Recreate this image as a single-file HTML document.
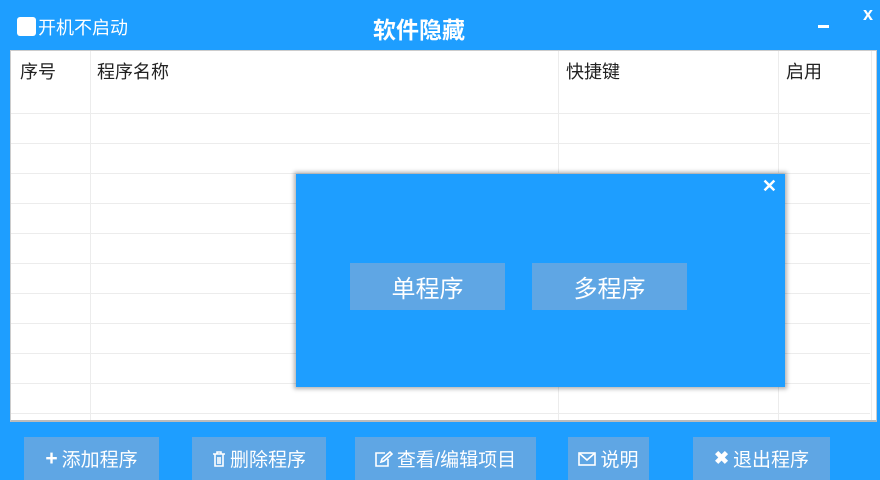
<!DOCTYPE html>
<html><head><meta charset="utf-8"><style>
*{margin:0;padding:0;box-sizing:border-box}
body{width:880px;height:480px;background:#1e9eff;position:relative;overflow:hidden;font-family:"Liberation Sans","Noto Sans CJK SC",sans-serif;color:#fff}
.abs{position:absolute}
.tbl{left:10px;top:50px;width:867px;height:372px;background:#fff;border:1px solid #ccc;border-bottom:2px solid #bbb}
.vl{position:absolute;top:0;bottom:0;width:1px;background:#ececec}
.hl{position:absolute;left:0;right:6px;height:1px;background:#ececec}
.th{position:absolute;top:7px;font-size:18px;color:#222}
.btn{position:absolute;top:437px;height:43px;background:#5fa6e4;font-size:19px;display:flex;align-items:center;justify-content:center;gap:4px}
.dlg{left:296px;top:174px;width:489px;height:213px;background:#1e9eff;box-shadow:0 0 4px 2px rgba(0,0,0,.3)}
.db{position:absolute;top:89px;width:155px;height:47px;background:#5fa6e4;font-size:24px;display:flex;align-items:center;justify-content:center}
</style></head><body>
<div class="abs" style="left:17px;top:17px;width:19px;height:19px;background:#fff;border-radius:3px"></div>
<div class="abs" style="left:38px;top:14px;font-size:18px">开机不启动</div>
<div class="abs" style="left:373px;top:11px;font-size:23px;font-weight:bold">软件隐藏</div>
<div class="abs" style="left:818px;top:25px;width:11px;height:3px;background:#fff"></div>
<div class="abs" style="left:863px;top:4px;font-size:18px;font-weight:bold">x</div>
<div class="abs tbl">
<div class="vl" style="left:79px"></div><div class="vl" style="left:547px"></div><div class="vl" style="left:767px"></div><div class="vl" style="left:860px"></div>
<div class="th" style="left:9px">序号</div><div class="th" style="left:86px">程序名称</div><div class="th" style="left:555px">快捷键</div><div class="th" style="left:775px">启用</div>
<div class="hl" style="top:62px"></div><div class="hl" style="top:92px"></div><div class="hl" style="top:122px"></div><div class="hl" style="top:152px"></div><div class="hl" style="top:182px"></div><div class="hl" style="top:212px"></div><div class="hl" style="top:242px"></div><div class="hl" style="top:272px"></div><div class="hl" style="top:302px"></div><div class="hl" style="top:332px"></div><div class="hl" style="top:362px"></div>
</div>
<div class="btn" style="left:24px;width:135px"><b style="font-size:21px">+</b>添加程序</div>
<div class="btn" style="left:192px;width:134px"><svg width="14" height="16" viewBox="0 0 14 16" fill="none" stroke="#fff" stroke-width="1.6"><path d="M1 3h12M5 3V1h4v2M3 3v12h8V3M6 6v7M8 6v7"/></svg>删除程序</div>
<div class="btn" style="left:355px;width:181px"><svg width="18" height="16" viewBox="0 0 18 16" fill="none" stroke="#fff" stroke-width="1.6"><path d="M10 2H1v13h12V8M6 11l1-3 8-7 2 2-8 7z"/></svg>查看/编辑项目</div>
<div class="btn" style="left:568px;width:81px"><svg width="18" height="14" viewBox="0 0 18 14" fill="none" stroke="#fff" stroke-width="1.6"><rect x="1" y="1" width="16" height="12"/><path d="M1 1l8 7 8-7"/></svg>说明</div>
<div class="btn" style="left:693px;width:137px"><b style="font-size:18px">✖</b>退出程序</div>
<div class="abs dlg">
<div class="abs" style="right:8px;top:2px;font-size:18px;font-weight:bold">✕</div>
<div class="db" style="left:54px">单程序</div>
<div class="db" style="left:236px">多程序</div>
</div>
</body></html>
